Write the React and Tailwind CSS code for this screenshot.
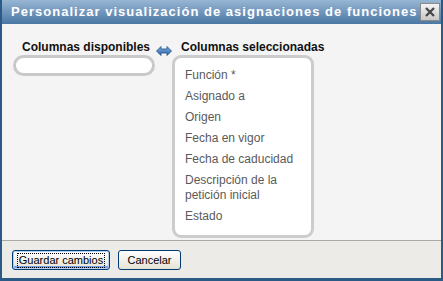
import React from 'react';

const items = [
  'Función *',
  'Asignado a',
  'Origen',
  'Fecha en vigor',
  'Fecha de caducidad',
  'Descripción de la petición inicial',
  'Estado',
];

function ArrowBoth() {
  return (
    <svg width="16" height="10" viewBox="0 0 16 10" className="mt-[7px] shrink-0">
      <defs>
        <linearGradient id="ab" x1="0" y1="0" x2="0" y2="1">
          <stop offset="0" stopColor="#7fb0e0" />
          <stop offset="1" stopColor="#2a62a8" />
        </linearGradient>
      </defs>
      <path d="M0.5 5 L5 0.5 L5 3 L11 3 L11 0.5 L15.5 5 L11 9.5 L11 7 L5 7 L5 9.5 Z" fill="url(#ab)" stroke="#1f4f8a" strokeWidth="0.8" />
    </svg>
  );
}

export default function App() {
  return (
    <div className="flex h-[281px] w-[443px] flex-col border-x-2 border-b-[3px] border-[#2c5a86] font-['Liberation_Sans',Arial,sans-serif]">
      <div className="flex h-[24px] shrink-0 items-center justify-between bg-gradient-to-b from-[#98b6d4] to-[#4a77a4] pl-[9px] pr-[1px]">
        <span className="min-w-0 whitespace-nowrap text-[13px] font-bold tracking-[1.02px] text-white">
          Personalizar visualización de asignaciones de funciones
        </span>
        <button className="flex h-[18px] w-[20px] shrink-0 items-center justify-center border border-[#8a8a8a] bg-gradient-to-b from-[#f4f4f4] to-[#c8c8c8]">
          <svg width="12" height="12" viewBox="0 0 12 12">
            <path d="M2 2 L10 10 M10 2 L2 10" stroke="#444" strokeWidth="2.2" />
          </svg>
        </button>
      </div>

      <div className="flex flex-1 gap-[1px] bg-[#f4f4f4] pl-[11px] pt-[15px]">
        <div className="flex w-[142px] flex-col">
          <div className="pl-[9px] text-[12px] font-bold leading-[16px] text-[#111]">Columnas disponibles</div>
          <div className="h-[21px] rounded-full border-[3px] border-[#c9c9c9] bg-white" />
        </div>
        <ArrowBoth />
        <div className="flex flex-col">
          <div className="-ml-[5px] pl-[13px] text-[12px] font-bold leading-[16px] text-[#111]">Columnas seleccionadas</div>
          <div className="-ml-[1px] flex h-[183px] w-[142px] flex-col gap-[6px] rounded-[9px] border-[3px] border-[#cccccc] bg-white pl-[10px] pr-[4px] pt-[10px]">
            {items.map((t) => (
              <div key={t} className="text-[12px] leading-[15px] text-[#5a5a5a]">{t}</div>
            ))}
          </div>
        </div>
      </div>

      <div className="flex h-[38px] shrink-0 items-center gap-[8px] border-t border-[#a9a9a9] bg-[#ecebe8] pl-[10px] pt-[1px]">
        <button className="flex h-[20px] w-[98px] shrink-0 items-center justify-center whitespace-nowrap rounded-[3px] border border-[#003c74] bg-gradient-to-b from-white to-[#e6e3d6] text-[11px] text-black shadow-[inset_0_0_0_1px_#b6d0f3,inset_0_-2px_0_1px_#7aa1e6]">
          <span className="border border-dotted border-black px-[1px] leading-[13px]">Guardar cambios</span>
        </button>
        <button className="h-[20px] w-[63px] shrink-0 whitespace-nowrap rounded-[3px] border border-[#003c74] bg-gradient-to-b from-white to-[#e6e3d6] text-[11px] text-black">
          Cancelar
        </button>
      </div>
    </div>
  );
}
